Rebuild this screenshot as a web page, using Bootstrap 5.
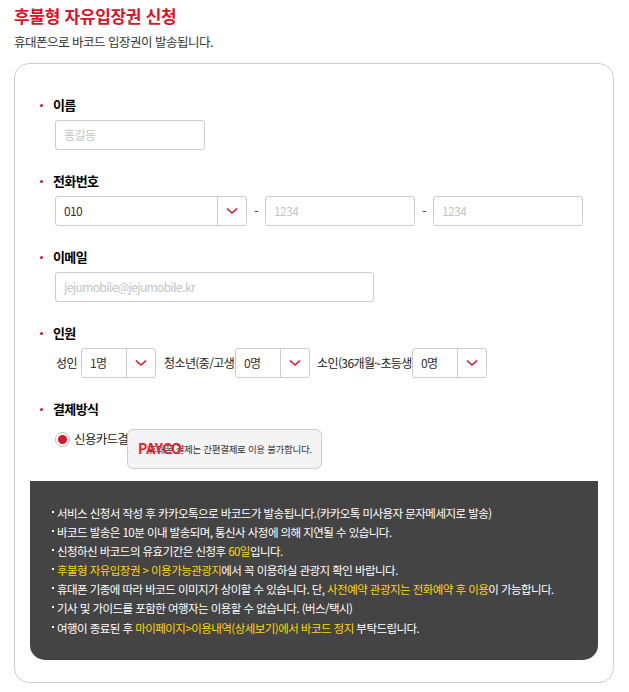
<!DOCTYPE html>
<html lang="ko"><head><meta charset="utf-8">
<link rel="stylesheet" href="https://cdn.jsdelivr.net/npm/bootstrap@5.3.0/dist/css/bootstrap.min.css">
<style>
body{font-family:"Noto Sans CJK KR","Liberation Sans",sans-serif;background:#fff;color:#222;font-size:12px;letter-spacing:-.6px;overflow:hidden}
.pagewrap{padding:5px 15px 0 14px}
.ttl{font-size:17px;font-weight:700;color:#d9132b;line-height:22px;margin:0;letter-spacing:-.3px}
.sub{font-size:12.5px;line-height:18px;margin:6px 0 0;color:#333;letter-spacing:-.5px}
.boxwrap{border:1px solid #ccc;border-radius:15px;margin-top:12px;height:620px;padding:32px 15px 0}
.fld{padding-left:10px;position:relative;height:76px}
.lbl{font-size:13px;font-weight:700;color:#000;line-height:17px;margin:0 0 7px;padding-left:13px;position:relative}
.lbl::before{content:"";position:absolute;left:0;top:8px;width:3px;height:3px;border-radius:50%;background:#d9132b}
.rowline{padding-left:15px;height:30px}
.ipt{border:1px solid #ccc;border-radius:3px;height:30px;padding:0 8px;line-height:28px;font-size:12px;background:#fff;color:#333}
.ph{color:#c4c4c4}
.w150{width:150px}.w160{width:150px}.w319{width:319px}
.sel{border:1px solid #ccc;border-radius:3px;height:30px;display:flex;align-items:stretch;background:#fff;color:#333;line-height:28px;font-size:12px}
.sel span{flex:1;padding-left:8px}
.sel i{width:29px;border-left:1px solid #ccc;display:flex;align-items:center;justify-content:center}
.dash{width:18px;text-align:center;font-size:12px;color:#222}
.plabel{font-size:12px;color:#222;white-space:nowrap}
.radio{width:15px;height:15px;border:1px solid #bbb;border-radius:50%;display:inline-flex;align-items:center;justify-content:center;background:#fff}
.radio b{width:9px;height:9px;border-radius:50%;background:#d9132b}
.paytip{position:absolute;left:97px;top:29px;width:195px;height:40px;background:#f4f4f4;border:1px solid #ccc;border-radius:6px;font-size:9.5px;line-height:38px;padding-left:20px;color:#333;letter-spacing:-.3px;white-space:nowrap}
.payco{position:absolute;left:108px;top:29px;font-size:14px;font-weight:700;color:#e8202f;line-height:38px;letter-spacing:-.2px;white-space:nowrap}
.paygrey{position:absolute;left:170px;top:29px;line-height:38px;color:#555}
.noti{background:#444;color:#fff;border-radius:0 0 15px 15px;margin-top:5px;height:179px;padding:23px 0 0 21px;font-size:11.5px;line-height:19.1px;letter-spacing:-.55px}
.noti ul{list-style:none;margin:0;padding:0}
.noti li{position:relative;padding-left:6px;white-space:nowrap}
.noti li::before{content:"";position:absolute;left:1px;top:7px;width:2px;height:2px;background:#fff}
.ylw{color:#ffd800}
</style></head><body>
<div class="pagewrap">
<h1 class="ttl">후불형 자유입장권 신청</h1>
<p class="sub">휴대폰으로 바코드 입장권이 발송됩니다.</p>
<div class="boxwrap">
 <div class="fld"><p class="lbl">이름</p><div class="rowline d-flex"><div class="ipt w150 ph">홍길동</div></div></div>
 <div class="fld"><p class="lbl">전화번호</p><div class="rowline d-flex align-items-center">
  <div class="sel" style="width:192px"><span>010</span><i><svg width="12" height="8" viewBox="0 0 12 8"><path d="M1 1.5l5 4.5 5-4.5" fill="none" stroke="#d9132b" stroke-width="1.6"/></svg></i></div>
  <div class="dash" style="width:18px;margin:0 0 0 0">-</div><div class="ipt ph" style="width:150px">1234</div>
  <div class="dash">-</div><div class="ipt ph" style="width:150px">1234</div></div></div>
 <div class="fld"><p class="lbl">이메일</p><div class="rowline d-flex"><div class="ipt w319 ph">jejumobile@jejumobile.kr</div></div></div>
 <div class="fld"><p class="lbl">인원</p><div class="rowline d-flex align-items-center">
  <span class="plabel" style="width:25px;margin-left:1px">성인</span>
  <div class="sel" style="width:75px"><span>1명</span><i><svg width="12" height="8" viewBox="0 0 12 8"><path d="M1 1.5l5 4.5 5-4.5" fill="none" stroke="#d9132b" stroke-width="1.6"/></svg></i></div>
  <span class="plabel" style="margin:0 7px 0 8px;width:64px">청소년(중/고생)</span>
  <div class="sel" style="width:75px"><span>0명</span><i><svg width="12" height="8" viewBox="0 0 12 8"><path d="M1 1.5l5 4.5 5-4.5" fill="none" stroke="#d9132b" stroke-width="1.6"/></svg></i></div>
  <span class="plabel" style="margin:0 7px 0 7px;width:88px">소인(36개월~초등생)</span>
  <div class="sel" style="width:75px"><span>0명</span><i><svg width="12" height="8" viewBox="0 0 12 8"><path d="M1 1.5l5 4.5 5-4.5" fill="none" stroke="#d9132b" stroke-width="1.6"/></svg></i></div>
 </div></div>
 <div class="fld"><p class="lbl">결제방식</p><div class="rowline d-flex align-items-center">
  <span class="radio"><b></b></span><span class="ms-1" style="font-size:12.5px">신용카드결제</span>
  <span class="radio" style="margin-left:7px"></span>
  <div class="paytip">휴대폰 결제는 간편결제로 이용 불가합니다.</div>
  <span class="payco">PAYCO</span>
 </div></div>
 <div class="noti"><ul>
 <li>서비스 신청서 작성 후 카카오톡으로 바코드가 발송됩니다.(카카오톡 미사용자 문자메세지로 발송)</li>
 <li>바코드 발송은 10분 이내 발송되며, 통신사 사정에 의해 지연될 수 있습니다.</li>
 <li>신청하신 바코드의 유효기간은 신청후 <span class="ylw">60일</span>입니다.</li>
 <li><span class="ylw">후불형 자유입장권 &gt; 이용가능관광지</span>에서 꼭 이용하실 관광지 확인 바랍니다.</li>
 <li>휴대폰 기종에 따라 바코드 이미지가 상이할 수 있습니다. 단, <span class="ylw">사전예약 관광지는 전화예약 후 이용</span>이 가능합니다.</li>
 <li>기사 및 가이드를 포함한 여행자는 이용할 수 없습니다. (버스/택시)</li>
 <li>여행이 종료된 후 <span class="ylw">마이페이지&gt;이용내역(상세보기)에서 바코드 정지</span> 부탁드립니다.</li>
 </ul></div>
</div></div>
<script src="https://cdn.jsdelivr.net/npm/bootstrap@5.3.0/dist/js/bootstrap.bundle.min.js"></script>
</body></html>
